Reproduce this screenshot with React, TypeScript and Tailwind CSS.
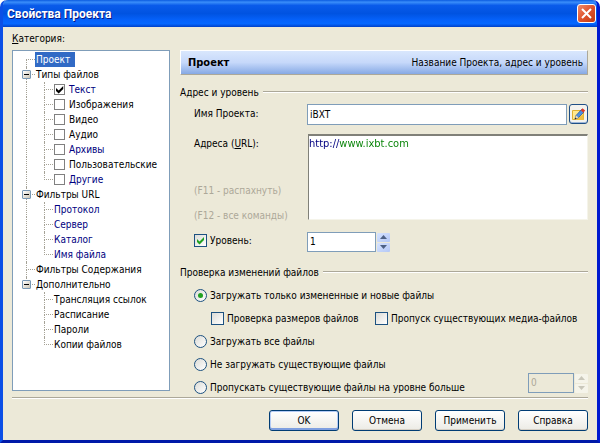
import { useState, type ReactNode } from "react";

type Branch = "first" | "middle" | "last";

type TreeChild = {
  label: string;
  filter?: boolean;
  checked?: boolean;
};

type TreeGroup = {
  label: string;
  checkable?: boolean;
  items?: TreeChild[];
};

const tree: TreeGroup[] = [
  { label: "Проект" },
  {
    label: "Типы файлов",
    checkable: true,
    items: [
      { label: "Текст", filter: true, checked: true },
      { label: "Изображения" },
      { label: "Видео" },
      { label: "Аудио" },
      { label: "Архивы", filter: true },
      { label: "Пользовательские" },
      { label: "Другие", filter: true }
    ]
  },
  {
    label: "Фильтры URL",
    items: [
      { label: "Протокол", filter: true },
      { label: "Сервер", filter: true },
      { label: "Каталог", filter: true },
      { label: "Имя файла", filter: true }
    ]
  },
  { label: "Фильтры Содержания" },
  {
    label: "Дополнительно",
    items: [{ label: "Трансляция ссылок" }, { label: "Расписание" }, { label: "Пароли" }, { label: "Копии файлов" }]
  }
];

function BranchLine({ kind }: { kind: Branch }) {
  return (
    <span className="flex h-full w-[9px] shrink-0 flex-col">
      <span className={`h-2 border-b border-dotted border-[#a5a296] ${kind === "first" ? "" : "border-l"}`} />
      <span className={`flex-1 border-dotted border-[#a5a296] ${kind === "last" ? "" : "border-l"}`} />
    </span>
  );
}

function TreeItem({ item, checkable, last, trunk }: { item: TreeChild; checkable?: boolean; last: boolean; trunk: boolean }) {
  const color = item.filter ? "text-[#000080]" : "text-black";
  return (
    <li className="flex h-[15px] items-center">
      <span className={`h-full w-[18px] shrink-0 border-dotted border-[#a5a296] ${trunk ? "border-l" : ""}`} />
      <BranchLine kind={last ? "last" : "middle"} />
      {checkable ? (
        <label className={`flex items-center gap-1 pl-px whitespace-nowrap ${color}`}>
          <span className="grid">
            <input
              type="checkbox"
              defaultChecked={item.checked}
              className="peer col-start-1 row-start-1 size-[11px] appearance-none border border-[#808080] bg-white"
            />
            <svg className="pointer-events-none invisible col-start-1 row-start-1 size-[11px] peer-checked:visible" viewBox="0 0 11 11">
              <path d="M2 4v3l2.700 2.500L9.200 5V2L4.700 6.500z" fill="#000" />
            </svg>
          </span>
          {item.label}
        </label>
      ) : (
        <a href="#" className={`pl-px whitespace-nowrap ${color}`}>
          {item.label}
        </a>
      )}
    </li>
  );
}

function CategoryTree() {
  const [closed, setClosed] = useState<string[]>([]);
  const toggle = (label: string) =>
    setClosed((prev) => (prev.includes(label) ? prev.filter((l) => l !== label) : [...prev, label]));

  return (
    <ul className="flex-1 border border-[#7f9db9] bg-white pt-px pl-[13px]">
      {tree.map((group, i) => {
        const last = i === tree.length - 1;
        const open = !closed.includes(group.label);
        return (
          <li key={group.label}>
            <div className="relative flex h-[15px] items-center">
              <BranchLine kind={i === 0 ? "first" : last ? "last" : "middle"} />
              {group.items && (
                <button
                  type="button"
                  aria-label={group.label}
                  aria-expanded={open}
                  onClick={() => toggle(group.label)}
                  className="absolute top-[3px] -left-1 flex size-[9px] items-center justify-center rounded-[1px] border border-[#7898b5] bg-linear-to-br from-white to-[#cbc5b5]"
                >
                  <span className="h-px w-[5px] bg-black" />
                </button>
              )}
              <a
                href="#"
                className={`flex h-full items-center whitespace-nowrap ${i === 0 ? "bg-[#316ac5] pr-[5px] pl-px text-white" : "pl-px text-black"}`}
              >
                {group.label}
              </a>
            </div>
            {group.items && open && (
              <ul>
                {group.items.map((item, j) => (
                  <TreeItem
                    key={item.label}
                    item={item}
                    checkable={group.checkable}
                    last={j === group.items!.length - 1}
                    trunk={!last}
                  />
                ))}
              </ul>
            )}
          </li>
        );
      })}
    </ul>
  );
}

function Caption({ children }: { children: ReactNode }) {
  return (
    <h3 className="flex h-4 items-center gap-1 whitespace-nowrap">
      <span>{children}</span>
      <span className="h-[2px] flex-1 border-t border-b border-t-[#aca899] border-b-white" />
    </h3>
  );
}

function Check({ children, defaultChecked }: { children: ReactNode; defaultChecked?: boolean }) {
  return (
    <label className="flex h-4 items-center gap-[3px] whitespace-nowrap">
      <span className="grid">
        <input
          type="checkbox"
          defaultChecked={defaultChecked}
          className="peer col-start-1 row-start-1 size-[13px] appearance-none border border-[#1c5180] bg-linear-to-br from-[#dcdcd7] to-white"
        />
        <svg className="pointer-events-none invisible col-start-1 row-start-1 size-[13px] peer-checked:visible" viewBox="0 0 13 13">
          <path d="M3 5v3l2.500 2.500L10 6V3L5.500 7.500z" fill="#21a121" />
        </svg>
      </span>
      {children}
    </label>
  );
}

function Radio({ children, defaultChecked }: { children: ReactNode; defaultChecked?: boolean }) {
  return (
    <label className="flex h-4 items-center gap-[3px] whitespace-nowrap">
      <span className="grid">
        <input
          type="radio"
          name="update-mode"
          defaultChecked={defaultChecked}
          className="peer col-start-1 row-start-1 size-[13px] appearance-none rounded-full border border-[#1c5180] bg-linear-to-br from-[#dcdcd7] to-white"
        />
        <span className="pointer-events-none invisible col-start-1 row-start-1 size-[5px] place-self-center rounded-full bg-[#21a121] peer-checked:visible" />
      </span>
      {children}
    </label>
  );
}

function Spinner({ label, initial, width, disabled }: { label: string; initial: number; width: string; disabled?: boolean }) {
  const [value, setValue] = useState(initial);
  const arrow = disabled
    ? "bg-[#f5f4ea] text-[#c9c7ba]"
    : "bg-linear-to-br from-[#d6e3ff] to-[#b4c8f6] text-[#4d6185]";
  return (
    <div className="flex items-center gap-px">
      <input
        aria-label={label}
        inputMode="numeric"
        value={value}
        disabled={disabled}
        onChange={(e) => setValue(Number(e.target.value) || 0)}
        className={`h-5 border border-[#7f9db9] bg-white px-[2px] pb-[2px] disabled:bg-[#ece9d8] disabled:text-[#aca899] ${width}`}
      />
      <div className="flex flex-col gap-px">
        <button
          type="button"
          aria-label="Больше"
          disabled={disabled}
          onClick={() => setValue(value + 1)}
          className={`flex h-[9px] w-[13px] items-center justify-center rounded-[1px] ${arrow}`}
        >
          <svg viewBox="0 0 7 4" className="h-1 w-[7px]">
            <path d="M0 4 3.500 0 7 4z" fill="currentColor" />
          </svg>
        </button>
        <button
          type="button"
          aria-label="Меньше"
          disabled={disabled}
          onClick={() => setValue(Math.max(0, value - 1))}
          className={`flex h-[9px] w-[13px] items-center justify-center rounded-[1px] ${arrow}`}
        >
          <svg viewBox="0 0 7 4" className="h-1 w-[7px]">
            <path d="M0 0 3.500 4 7 0z" fill="currentColor" />
          </svg>
        </button>
      </div>
    </div>
  );
}

function DialogButton({ children, primary }: { children: ReactNode; primary?: boolean }) {
  return (
    <button
      type="button"
      className={`h-[21px] w-[70px] rounded-[3px] border border-[#003c74] bg-linear-to-b from-white to-[#ecebe5] pb-px ${
        primary ? "shadow-[inset_0_-2px_0_#7f9fe0,inset_0_0_0_1px_#b4cbf5]" : "shadow-[inset_0_-1px_0_#d6d0c5]"
      }`}
    >
      {children}
    </button>
  );
}

export default function App() {
  return (
    <main className="flex min-h-screen flex-col rounded-t-[7px] border-r-[3px] border-b-[3px] border-l-[3px] border-r-[#0019cf] border-b-[#0019a8] border-l-[#0b4fe6] bg-[#ece9d8] font-['DejaVu_Sans_Condensed','Noto_Sans',sans-serif] text-[10px] leading-[15px] text-black">
      <header className="flex h-[27px] items-center justify-between rounded-t-[5px] bg-[linear-gradient(180deg,#0b5be0_0%,#3a8efa_8%,#0a5bea_20%,#0053e1_50%,#0562fb_75%,#0568ff_88%,#0040c8_100%)] pr-[1px] pl-1">
        <h1 className="pt-px font-['Roboto',sans-serif] text-xs font-bold text-white [text-shadow:1px_1px_0_#0a1883]">Свойства Проекта</h1>
        <button
          type="button"
          aria-label="Закрыть"
          className="flex size-[19px] items-center justify-center rounded-[3px] border border-white bg-linear-to-br from-[#ee8a6a] via-[#e0532c] to-[#c23a10]"
        >
          <svg viewBox="0 0 11 11" className="size-[11px]">
            <path d="M1 1 10 10M10 1 1 10" stroke="#fff" strokeWidth="2" />
          </svg>
        </button>
      </header>

      <form className="flex flex-1 flex-col px-[9px] pt-1">
        <div className="flex flex-1 gap-[10px]">
          <nav className="flex w-[158px] shrink-0 flex-col pb-[6px]" aria-label="Категория">
            <h2 className="h-[19px]">
              <u>К</u>атегория:
            </h2>
            <CategoryTree />
          </nav>

          <section className="flex min-w-0 flex-1 flex-col pt-[19px]">
            <div className="flex h-[25px] items-center justify-between border-t border-r border-b border-l border-t-white border-r-[#aca899] border-b-[#aca899] border-l-white bg-linear-to-b from-[#d9e7fd] via-[#c6d8fa] to-[#86a9e4] pr-1 pl-[7px]">
              <h2 className="text-[11px] font-bold">Проект</h2>
              <p>Название Проекта, адрес и уровень</p>
            </div>

            <div className="pt-[9px]">
              <Caption>
                А<u>д</u>рес и уровень
              </Caption>
              <div className="grid grid-cols-[113px_1fr] gap-y-[9px] pt-1 pl-[14px]">
                <label htmlFor="project-name" className="pt-[2px]">
                  Имя Проекта:
                </label>
                <div className="flex gap-[2px]">
                  <input
                    id="project-name"
                    defaultValue="iBXT"
                    className="h-[21px] min-w-0 flex-1 border border-[#7f9db9] bg-white px-[2px] pb-px"
                  />
                  <button
                    type="button"
                    aria-label="Изменить имя"
                    className="flex h-[20px] w-[19px] items-center justify-center rounded-[3px] border border-[#1f4f86] bg-[#f4f3ee] shadow-[inset_0_-1px_0_#9db6d8]"
                  >
                    <svg viewBox="0 0 15 15" className="size-[15px]">
                      <path d="M1.500 3.500h11v9h-11z" fill="#ffe890" stroke="#e0b030" />
                      <path d="M12.500 7v6h-9z" fill="#f0c040" />
                      <path d="M4 12 5 8.500 10.500 2.500 13 5 7.500 10.500z" fill="#4e8fe0" stroke="#1d4f96" strokeWidth=".7" />
                      <path d="M4 12 5 8.500 7.500 10.500z" fill="#f5dcae" />
                      <path d="M3.600 12.400 4.300 10.500 5.600 11.600z" fill="#222" />
                      <path d="M9.800 3.300 11.500 1.200 14.200 3.600 12.300 5.700z" fill="#dd3a28" />
                    </svg>
                  </button>
                </div>

                <div className="flex flex-col pt-[2px]">
                  <label htmlFor="project-urls">
                    Адреса (<u>U</u>RL):
                  </label>
                  <p className="pt-8 text-[#aca899]">(F11 - распахнуть)</p>
                  <p className="pt-[10px] text-[#aca899]">(F12 - все команды)</p>
                </div>
                <div className="ml-px flex h-[86px] border-t-2 border-r border-b border-l border-t-[#808078] border-r-[#f5f4ea] border-b-[#f5f4ea] border-l-[#808078] bg-white">
                  <textarea
                    id="project-urls"
                    defaultValue="http://www.ixbt.com"
                    className="flex-1 resize-none bg-[linear-gradient(90deg,#000080_31px,#008000_31px)] bg-clip-text text-[11px] leading-[15px] text-transparent caret-black outline-none"
                  />
                </div>

                <Check defaultChecked>Уровень:</Check>
                <Spinner label="Уровень" initial={1} width="w-[69px]" />
              </div>
            </div>

            <fieldset className="min-w-0 pt-3">
              <Caption>Проверка изменений файлов</Caption>
              <div className="flex flex-col gap-[7px] pt-[7px] pl-[14px]">
                <Radio defaultChecked>Загружать только измененные и новые файлы</Radio>
                <div className="grid grid-cols-[164px_1fr] pl-[17px]">
                  <Check>Проверка размеров файлов</Check>
                  <Check>Пропуск существующих медиа-файлов</Check>
                </div>
                <Radio>Загружать все файлы</Radio>
                <Radio>Не загружать существующие файлы</Radio>
                <div className="flex h-4 items-center justify-between">
                  <Radio>Пропускать существующие файлы на уровне больше</Radio>
                  <div className="pb-2">
                    <Spinner label="Уровень больше" initial={0} width="w-[46px]" disabled />
                  </div>
                </div>
              </div>
            </fieldset>
          </section>
        </div>

        <footer className="flex justify-end gap-[13px] border-t border-[#aca899] pt-3 pb-[9px] shadow-[inset_0_1px_0_#fff]">
          <DialogButton primary>OK</DialogButton>
          <DialogButton>Отмена</DialogButton>
          <DialogButton>Применить</DialogButton>
          <DialogButton>Справка</DialogButton>
        </footer>
      </form>
    </main>
  );
}
